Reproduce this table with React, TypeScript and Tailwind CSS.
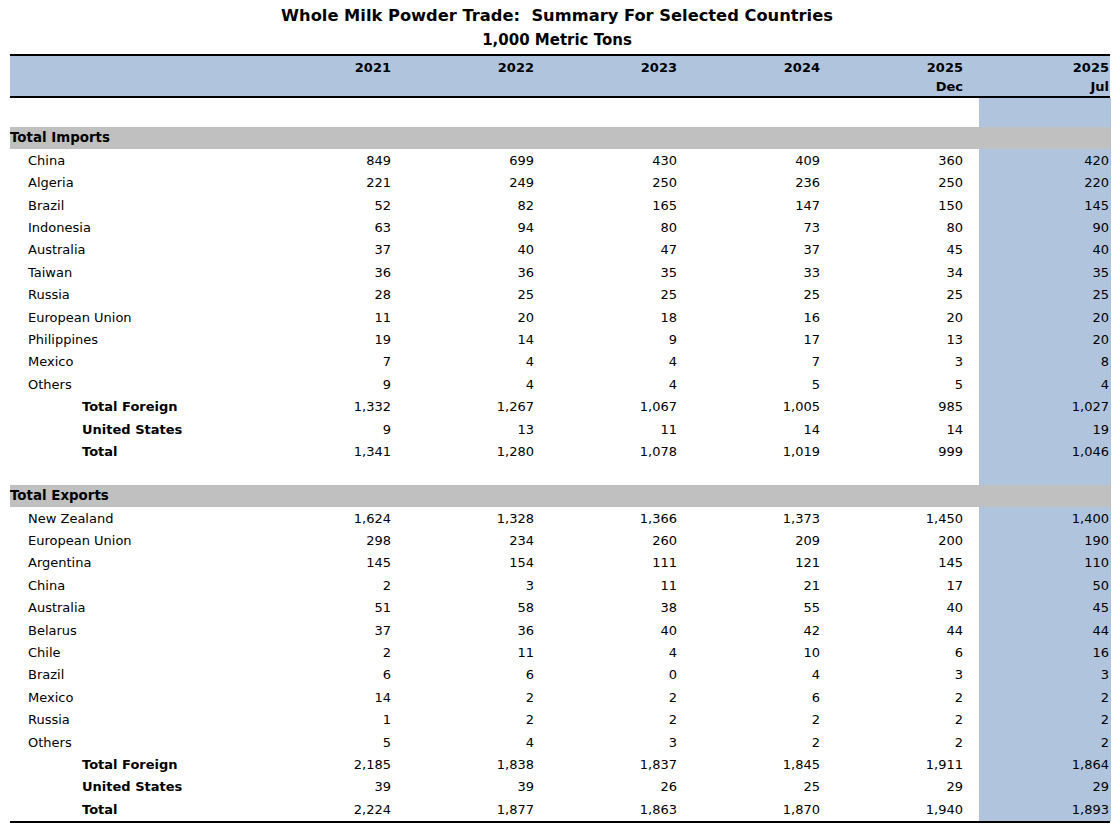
const years = [
  { y: "2021", sub: "" },
  { y: "2022", sub: "" },
  { y: "2023", sub: "" },
  { y: "2024", sub: "" },
  { y: "2025", sub: "Dec" },
];

type Row = { name: string; vals: string[]; bold?: boolean };

const imports: Row[] = [
  { name: "China", vals: ["849", "699", "430", "409", "360", "420"] },
  { name: "Algeria", vals: ["221", "249", "250", "236", "250", "220"] },
  { name: "Brazil", vals: ["52", "82", "165", "147", "150", "145"] },
  { name: "Indonesia", vals: ["63", "94", "80", "73", "80", "90"] },
  { name: "Australia", vals: ["37", "40", "47", "37", "45", "40"] },
  { name: "Taiwan", vals: ["36", "36", "35", "33", "34", "35"] },
  { name: "Russia", vals: ["28", "25", "25", "25", "25", "25"] },
  { name: "European Union", vals: ["11", "20", "18", "16", "20", "20"] },
  { name: "Philippines", vals: ["19", "14", "9", "17", "13", "20"] },
  { name: "Mexico", vals: ["7", "4", "4", "7", "3", "8"] },
  { name: "Others", vals: ["9", "4", "4", "5", "5", "4"] },
  { name: "Total Foreign", vals: ["1,332", "1,267", "1,067", "1,005", "985", "1,027"], bold: true },
  { name: "United States", vals: ["9", "13", "11", "14", "14", "19"], bold: true },
  { name: "Total", vals: ["1,341", "1,280", "1,078", "1,019", "999", "1,046"], bold: true },
];

const exports: Row[] = [
  { name: "New Zealand", vals: ["1,624", "1,328", "1,366", "1,373", "1,450", "1,400"] },
  { name: "European Union", vals: ["298", "234", "260", "209", "200", "190"] },
  { name: "Argentina", vals: ["145", "154", "111", "121", "145", "110"] },
  { name: "China", vals: ["2", "3", "11", "21", "17", "50"] },
  { name: "Australia", vals: ["51", "58", "38", "55", "40", "45"] },
  { name: "Belarus", vals: ["37", "36", "40", "42", "44", "44"] },
  { name: "Chile", vals: ["2", "11", "4", "10", "6", "16"] },
  { name: "Brazil", vals: ["6", "6", "0", "4", "3", "3"] },
  { name: "Mexico", vals: ["14", "2", "2", "6", "2", "2"] },
  { name: "Russia", vals: ["1", "2", "2", "2", "2", "2"] },
  { name: "Others", vals: ["5", "4", "3", "2", "2", "2"] },
  { name: "Total Foreign", vals: ["2,185", "1,838", "1,837", "1,845", "1,911", "1,864"], bold: true },
  { name: "United States", vals: ["39", "39", "26", "25", "29", "29"], bold: true },
  { name: "Total", vals: ["2,224", "1,877", "1,863", "1,870", "1,940", "1,893"], bold: true },
];

const cols = "grid grid-cols-[240px_143px_143px_143px_143px_143px_14px_132px]";

function DataRow({ row }: { row: Row }) {
  return (
    <div className={`${cols} h-[22.4px] items-center`}>
      <div className={row.bold ? "pl-[72px] font-bold" : "pl-[18px]"}>{row.name}</div>
      {row.vals.slice(0, 5).map((v, i) => (
        <div key={i} className="text-right pr-[2px]">
          {v}
        </div>
      ))}
      <div />
      <div className="h-full flex items-center justify-end pr-[2px] bg-[#b0c4de]">{row.vals[5]}</div>
    </div>
  );
}

function Blank({ h }: { h: string }) {
  return (
    <div className={`${cols} ${h}`}>
      <div className="col-span-7" />
      <div className="bg-[#b0c4de]" />
    </div>
  );
}

function Section({ title }: { title: string }) {
  return (
    <div className="h-[22.4px] flex items-center bg-[#c0c0c0] font-bold text-[13.4px]">{title}</div>
  );
}

export default function App() {
  return (
    <div className="w-[1120px] h-[826px] bg-white text-black text-[13px] font-['DejaVu_Sans',Verdana,sans-serif] overflow-hidden">
      <div className="ml-[10px] w-[1101px]">
        <h1 className="h-[30px] pt-[5px] pr-[7px] text-center text-[16.3px] font-bold leading-[22px]">
          Whole Milk Powder Trade:&nbsp; Summary For Selected Countries
        </h1>
        <p className="h-[24px] pr-[7px] text-center text-[15px] font-bold leading-[20px]">1,000 Metric Tons</p>
        <div className="w-[1100px] border-t-2 border-b-2 border-black">
          <div className={`${cols} h-[40px] bg-[#b0c4de] font-bold leading-[19px] pt-[2px]`}>
            <div />
            {years.map((c) => (
              <div key={c.y} className="text-right pr-[2px]">
                <div>{c.y}</div>
                <div>{c.sub}</div>
              </div>
            ))}
            <div />
            <div className="text-right pr-[2px]">
              <div>2025</div>
              <div>Jul</div>
            </div>
          </div>
        </div>
        <Blank h="h-[29px]" />
        <Section title="Total Imports" />
        {imports.map((r) => (
          <DataRow key={"i" + r.name} row={r} />
        ))}
        <Blank h="h-[22px]" />
        <Section title="Total Exports" />
        {exports.map((r) => (
          <DataRow key={"e" + r.name} row={r} />
        ))}
        <div className="w-[1100px] border-t-2 border-black" />
      </div>
    </div>
  );
}
